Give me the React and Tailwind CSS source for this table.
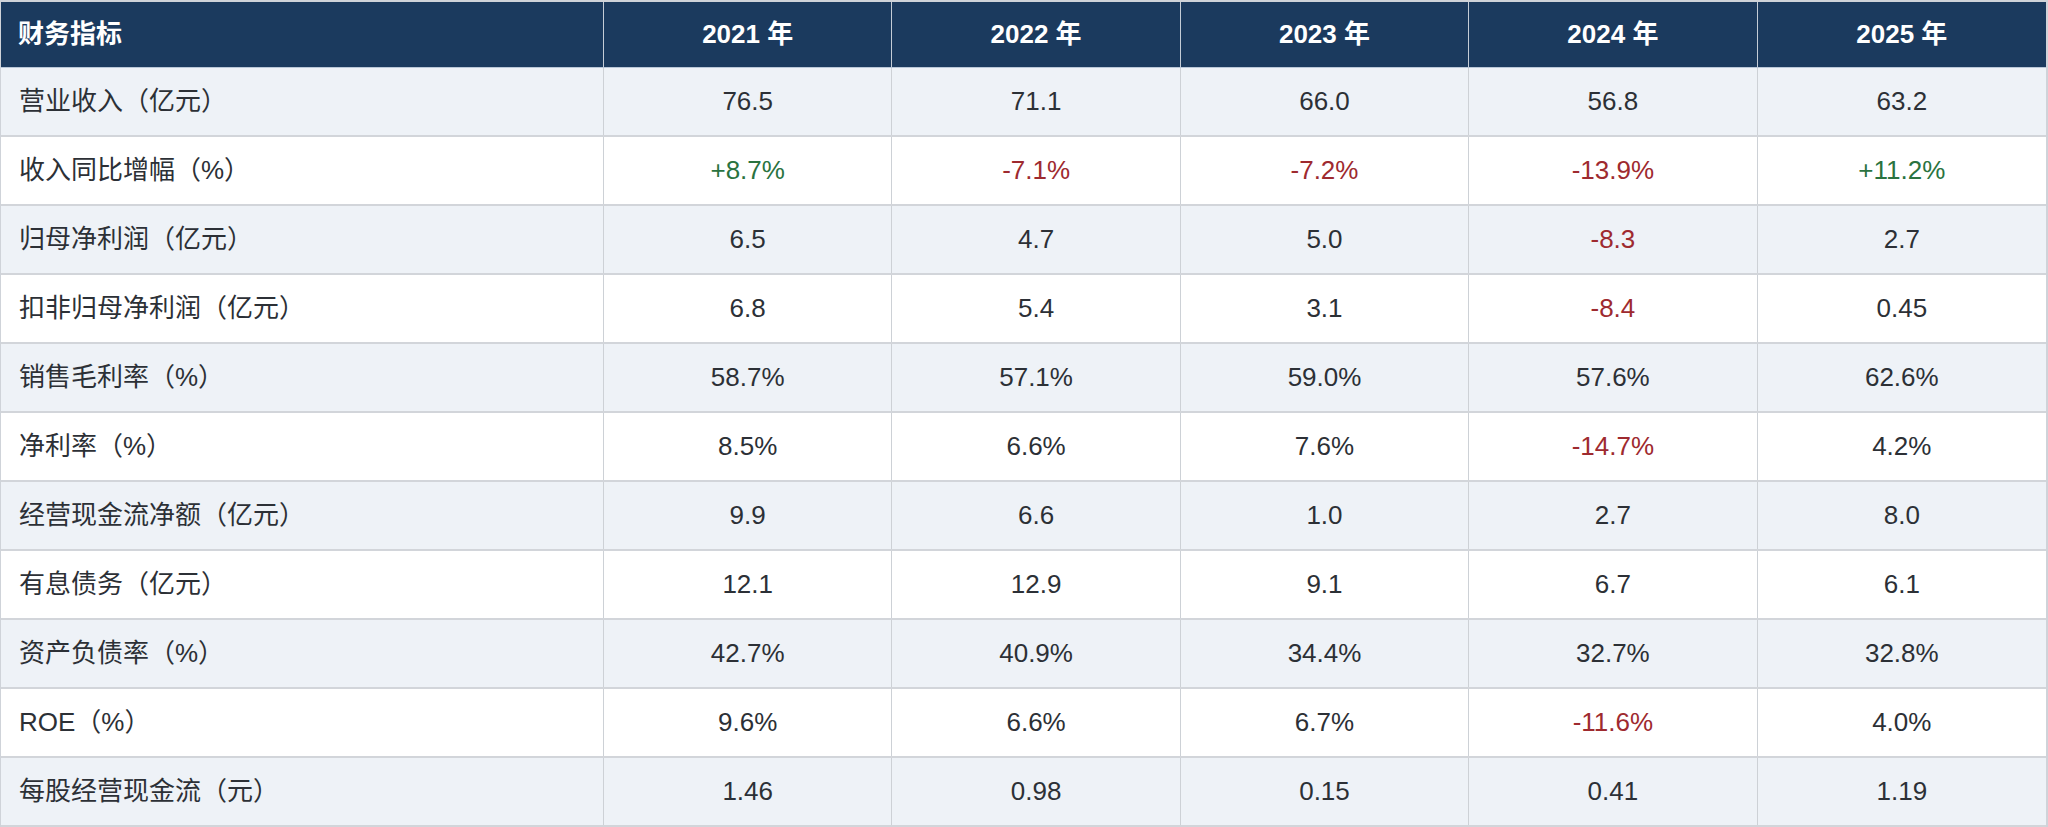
import React from "react";

const years = ["2021 年", "2022 年", "2023 年", "2024 年", "2025 年"];

// 每行: 指标名 + 五年数值; 以 + / - 开头的数值按涨跌着色
const rows = [
  ["营业收入（亿元）", ["76.5", "71.1", "66.0", "56.8", "63.2"]],
  ["收入同比增幅（%）", ["+8.7%", "-7.1%", "-7.2%", "-13.9%", "+11.2%"]],
  ["归母净利润（亿元）", ["6.5", "4.7", "5.0", "-8.3", "2.7"]],
  ["扣非归母净利润（亿元）", ["6.8", "5.4", "3.1", "-8.4", "0.45"]],
  ["销售毛利率（%）", ["58.7%", "57.1%", "59.0%", "57.6%", "62.6%"]],
  ["净利率（%）", ["8.5%", "6.6%", "7.6%", "-14.7%", "4.2%"]],
  ["经营现金流净额（亿元）", ["9.9", "6.6", "1.0", "2.7", "8.0"]],
  ["有息债务（亿元）", ["12.1", "12.9", "9.1", "6.7", "6.1"]],
  ["资产负债率（%）", ["42.7%", "40.9%", "34.4%", "32.7%", "32.8%"]],
  ["ROE（%）", ["9.6%", "6.6%", "6.7%", "-11.6%", "4.0%"]],
  ["每股经营现金流（元）", ["1.46", "0.98", "0.15", "0.41", "1.19"]],
];

const valueColor = (v) => {
  if (v.startsWith("-")) return "text-[#9e2a2f]";
  if (v.startsWith("+")) return "text-[#2a7340]";
  return "text-[#2c3036]";
};

const App = () => {
  return (
    <div
      className="w-[2048px] h-[827px] bg-white overflow-hidden"
      style={{ fontFamily: '"Liberation Sans", "Noto Sans CJK SC", Arial, sans-serif' }}
    >
      <div className="border-t-2 border-l border-r-2 border-[#cfd3d9]">
        {/*Header*/}
        <div className="grid grid-cols-[603px_repeat(5,1fr)] h-[66px] bg-[#1b3a5e] border-b border-[#b9c7d8] text-white font-bold text-[26px]">
          <div className="flex items-center pl-[17px] border-r border-[#c4ccd6]">
            财务指标
          </div>
          {years.map((y, i) => (
            <div
              key={y}
              className={`flex items-center justify-center ${
                i < 4 ? "border-r border-[#c4ccd6]" : ""
              }`}
            >
              {y}
            </div>
          ))}
        </div>

        {/*Body rows*/}
        {rows.map(([label, values], r) => (
          <div
            key={label}
            className={`grid grid-cols-[603px_repeat(5,1fr)] h-[69px] border-b-2 border-[#d2d5da] text-[26px] ${
              r % 2 === 0 ? "bg-[#eef2f7]" : "bg-white"
            }`}
          >
            <div className="flex items-center pl-[18px] border-r border-[#cdd1d6] text-[#2c3036]">
              {label}
            </div>
            {values.map((v, i) => (
              <div
                key={i}
                className={`flex items-center justify-center ${valueColor(v)} ${
                  i < 4 ? "border-r border-[#cdd1d6]" : ""
                }`}
              >
                {v}
              </div>
            ))}
          </div>
        ))}
      </div>
    </div>
  );
};

export default App;
